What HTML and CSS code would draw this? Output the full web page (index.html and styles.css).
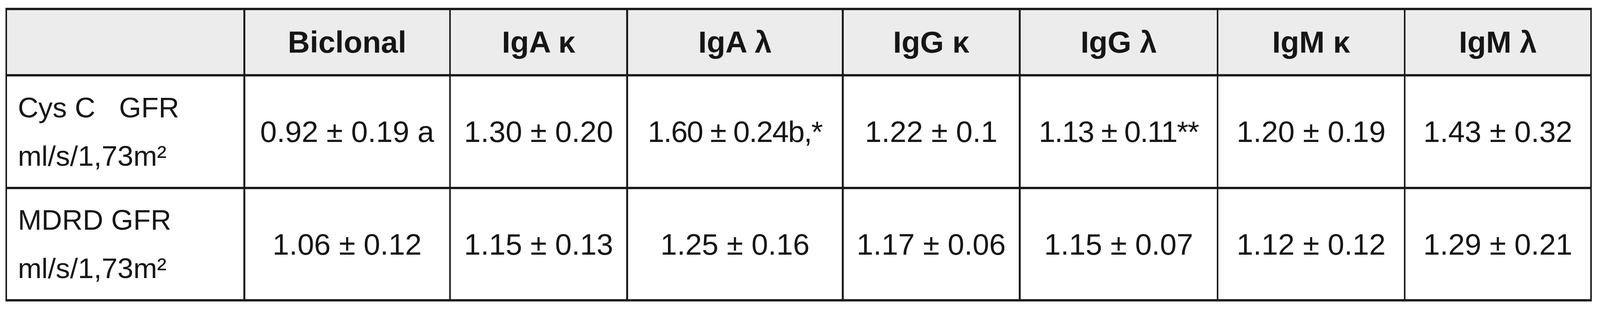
FILE: index.html
```html
<!DOCTYPE html>
<html lang="en">
<head>
<meta charset="utf-8">
<title>GFR table</title>
<link rel="stylesheet" href="styles.css">
</head>
<body>
<div class="grid-table">
  <div class="cell head"></div>
  <div class="cell head">Biclonal</div>
  <div class="cell head">IgA κ</div>
  <div class="cell head">IgA λ</div>
  <div class="cell head">IgG κ</div>
  <div class="cell head">IgG λ</div>
  <div class="cell head">IgM κ</div>
  <div class="cell head">IgM λ</div>

  <div class="cell label"><span>Cys C&nbsp;&nbsp; GFR</span><span>ml/s/1,73m²</span></div>
  <div class="cell">0.92 ± 0.19 a</div>
  <div class="cell">1.30 ± 0.20</div>
  <div class="cell tight">1.60 ± 0.24b,*</div>
  <div class="cell">1.22 ± 0.1</div>
  <div class="cell tight">1.13 ± 0.11**</div>
  <div class="cell">1.20 ± 0.19</div>
  <div class="cell">1.43 ± 0.32</div>

  <div class="cell label"><span>MDRD GFR</span><span>ml/s/1,73m²</span></div>
  <div class="cell">1.06 ± 0.12</div>
  <div class="cell">1.15 ± 0.13</div>
  <div class="cell">1.25 ± 0.16</div>
  <div class="cell">1.17 ± 0.06</div>
  <div class="cell">1.15 ± 0.07</div>
  <div class="cell">1.12 ± 0.12</div>
  <div class="cell">1.29 ± 0.21</div>
</div>
</body>
</html>
```

FILE: styles.css
```css
html, body {
  margin: 0;
  padding: 0;
  background: #ffffff;
}

/* Horizontal sizes are fractions of the 5561px-wide design so the
   table always fits the window width; vertical sizes are in px. */
.grid-table {
  display: grid;
  grid-template-columns:
    minmax(0, 821fr) minmax(0, 709fr) minmax(0, 610fr) minmax(0, 743fr)
    minmax(0, 609fr) minmax(0, 682fr) minmax(0, 644fr) minmax(0, 642fr);
  grid-template-rows: 164px 283px 282px;
  row-gap: 6px;
  column-gap: 0.108vw;
  padding: 6px 0.108vw;
  width: 99.155vw;
  box-sizing: border-box;
  margin: 20px 0 0 0.342vw;
  background: #1c1c1c;
}

.cell {
  display: flex;
  align-items: center;
  justify-content: center;
  overflow: hidden;
  background: #ffffff;
  color: #161616;
  font-family: "Liberation Sans", Arial, sans-serif;
  font-size: 1.865vw;
  white-space: nowrap;
}

.head {
  background: #ececec;
  font-weight: bold;
  font-size: 1.906vw;
}

.tight {
  letter-spacing: -0.05vw;
}

.label {
  flex-direction: column;
  align-items: flex-start;
  justify-content: center;
  padding-left: 0.665vw;
  font-size: 1.78vw;
  line-height: 124px;
}
```
